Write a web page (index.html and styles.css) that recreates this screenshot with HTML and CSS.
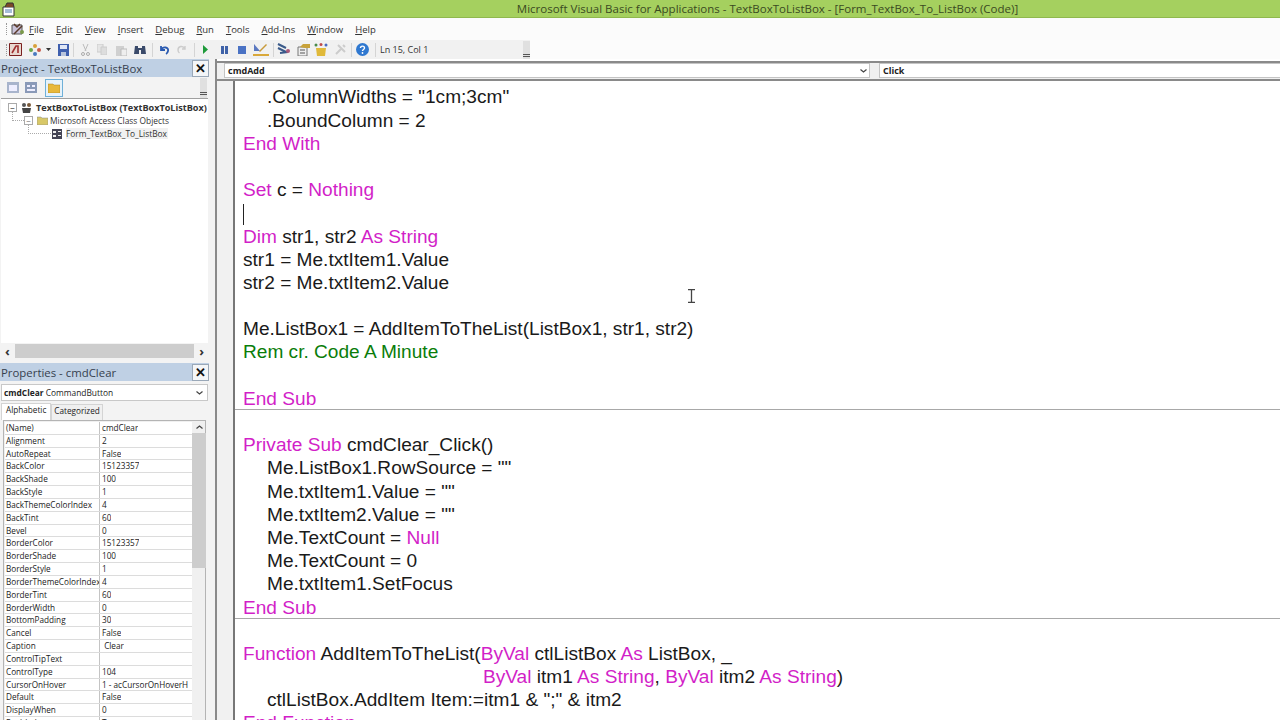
FILE: index.html
```html
<!DOCTYPE html>
<html lang="en">
<head>
    <meta charset="UTF-8">
    <title>Microsoft Visual Basic for Applications - TextBoxToListBox</title>
    <link rel="stylesheet" href="styles.css">
</head>
<body>
    <!-- Title bar -->
    <div class="titlebar">
        <svg class="app-icon" width="16" height="16" viewBox="0 0 16 16"><path d="M2 6h11v9H2z" fill="#fff" stroke="#333"/><path d="M4 6l2-4h6l1 4" fill="#7a4a2a" stroke="#333"/><path d="M4 9h7M4 11h7" stroke="#4a7ab0"/></svg>
        <span class="titlebar-text">Microsoft Visual Basic for Applications - TextBoxToListBox - [Form_TextBox_To_ListBox (Code)]</span>
    </div>

    <!-- Menu -->
    <div class="menubar">
        <span class="grip"></span>
        <svg class="menu-icon" width="14" height="14" viewBox="0 0 14 14"><path d="M1 3h10v9H1z" fill="#c9c2d8" stroke="#555"/><path d="M3 2l3 3 3-3M3 12l8-8" stroke="#5a3a2a" stroke-width="1.5" fill="none"/><circle cx="11" cy="10" r="2" fill="#7a9a4a"/></svg>
        <span class="menu-item menu-first"><u>F</u>ile</span>
        <span class="menu-item"><u>E</u>dit</span>
        <span class="menu-item"><u>V</u>iew</span>
        <span class="menu-item"><u>I</u>nsert</span>
        <span class="menu-item"><u>D</u>ebug</span>
        <span class="menu-item"><u>R</u>un</span>
        <span class="menu-item"><u>T</u>ools</span>
        <span class="menu-item"><u>A</u>dd-Ins</span>
        <span class="menu-item"><u>W</u>indow</span>
        <span class="menu-item"><u>H</u>elp</span>
    </div>

    <!-- Toolbar -->
    <div class="toolbar-row">
        <div class="toolbar">
            <span class="grip"></span>
            <svg class="tb gap-1" width="13" height="13" viewBox="0 0 13 13"><path d="M.5.5h12v12H.5z" fill="#e8d8d0" stroke="#7a1f1f"/><path d="M3 10l4-7h2v7" fill="none" stroke="#a03030" stroke-width="1.6"/></svg>
            <svg class="tb gap-6" width="14" height="14" viewBox="0 0 14 14"><circle cx="7" cy="3" r="2" fill="#d9a03a"/><circle cx="3" cy="7" r="2" fill="#6aa84a"/><circle cx="11" cy="7" r="2" fill="#c65a4a"/><circle cx="7" cy="11" r="2" fill="#4a7ac0"/></svg>
            <svg class="tb gap-4" width="5" height="3" viewBox="0 0 5 3"><path d="M0 0h5L2.500 3z" fill="#333"/></svg>
            <svg class="tb gap-7" width="11" height="12" viewBox="0 0 11 12"><path d="M0 0h11v12H0z" fill="#3f5fae"/><path d="M2 1h7v4H2z" fill="#dfe6f5"/><path d="M3 8h5v4H3z" fill="#b8c4dc"/></svg>
            <span class="tb-sep gap-4"></span>
            <svg class="tb gap-7" width="9" height="12" viewBox="0 0 9 12"><path d="M2 0l3 7M7 0L4 7" stroke="#bbb" fill="none"/><circle cx="2" cy="10" r="1.500" fill="none" stroke="#aaa"/><circle cx="7" cy="10" r="1.500" fill="none" stroke="#aaa"/></svg>
            <svg class="tb gap-7" width="10" height="11" viewBox="0 0 10 11"><path d="M0 0h6v8H0z" fill="#e5e5e5" stroke="#ccc"/><path d="M4 3h6v8H4z" fill="#ddd" stroke="#ccc"/></svg>
            <svg class="tb gap-9" width="11" height="12" viewBox="0 0 11 12"><path d="M0 2h8v10H0z" fill="#d0d0d0"/><path d="M5 5h6v7H5z" fill="#eee" stroke="#bbb"/></svg>
            <svg class="tb gap-7" width="12" height="11" viewBox="0 0 12 11"><path d="M1 2h3v2h4V2h3l1 8H7V6H5v4H0z" fill="#3a4a6a"/></svg>
            <span class="tb-sep gap-6"></span>
            <svg class="tb gap-6" width="10" height="10" viewBox="0 0 10 10"><path d="M2 1v4h4M2 5c2-4 8-3 7 1-.3 1.500-1 2.500-2 3" fill="none" stroke="#2a5ab0" stroke-width="1.800"/></svg>
            <svg class="tb gap-8" width="9" height="9" viewBox="0 0 9 9"><path d="M8 1v3H5M8 4C6 0 1 1 1 5c0 1.500.7 2.500 1.500 3" fill="none" stroke="#ccc" stroke-width="1.400"/></svg>
            <span class="tb-sep gap-8"></span>
            <svg class="tb gap-8" width="5" height="9" viewBox="0 0 5 9"><path d="M0 0l5 4.500L0 9z" fill="#1e9a3a"/></svg>
            <svg class="tb gap-13" width="7" height="8" viewBox="0 0 7 8"><path d="M0 0h3v8H0zM4 0h3v8H4z" fill="#3f62a8"/></svg>
            <svg class="tb gap-10" width="8" height="8" viewBox="0 0 8 8"><path d="M0 0h8v8H0z" fill="#4a72c4"/></svg>
            <svg class="tb gap-7" width="16" height="13" viewBox="0 0 16 13"><path d="M1 1l6 7H1z" fill="#5a78c0"/><path d="M6 8l7-7 1 1-7 7z" fill="#c89a3a"/><path d="M0 11h16v2H0z" fill="#d9a83a"/></svg>
            <span class="tb-sep gap-4"></span>
            <svg class="tb gap-3" width="14" height="13" viewBox="0 0 14 13"><path d="M1 1l8 4M1 5l8 4M3 10l8-1" stroke="#3a5a8a" stroke-width="2"/><circle cx="11" cy="8" r="2" fill="#a85a7a"/></svg>
            <svg class="tb gap-6" width="13" height="13" viewBox="0 0 13 13"><path d="M1 4h9v9H1z" fill="#eee" stroke="#777"/><path d="M3 4l3-3h7v4H8z" fill="#c8a23a"/><path d="M3 7h5M3 10h5" stroke="#555"/></svg>
            <svg class="tb gap-4" width="14" height="13" viewBox="0 0 14 13"><path d="M2 5h10l-1 8H3z" fill="#e0b93a"/><circle cx="2" cy="2" r="1.500" fill="#4a8a4a"/><circle cx="7" cy="1.500" r="1.500" fill="#c04a4a"/><circle cx="12" cy="2" r="1.500" fill="#4a6ac0"/></svg>
            <svg class="tb gap-7" width="11" height="11" viewBox="0 0 11 11"><path d="M1 10l6-6M3 1l7 7M8 1l2 2" stroke="#ccc" stroke-width="2" fill="none"/></svg>
            <span class="tb-sep gap-5"></span>
            <svg class="tb gap-4" width="13" height="13" viewBox="0 0 13 13"><circle cx="6.500" cy="6.500" r="6.500" fill="#2f78d0"/><path d="M4.500 5c0-2.500 4-2.500 4 0 0 1.500-2 1.500-2 3" fill="none" stroke="#fff" stroke-width="1.400"/><circle cx="6.500" cy="10" r=".9" fill="#fff"/></svg>
            <span class="tb-sep gap-6"></span>
            <span class="tb-status gap-4">Ln 15, Col 1</span>
            <span class="overflow-grip"></span>
        </div>
    </div>

    <div class="main">
        <!-- Left docked windows -->
        <div class="sidebar">
            <div class="dock-title">
                <span>Project - TextBoxToListBox</span>
                <span class="close-btn">&#10005;</span>
            </div>
            <div class="project-tools">
                <svg width="12" height="11" viewBox="0 0 12 11"><path d="M0 0h12v11H0z" fill="#a8b4cc"/><path d="M2 3h8v6H2z" fill="#eef"/></svg>
                <svg width="12" height="11" viewBox="0 0 12 11"><path d="M0 0h12v11H0z" fill="#8a9ab8"/><path d="M2 3h3v2H2zM7 3h3v2H7zM2 7h8v2H2z" fill="#eef"/></svg>
                <span class="folder-btn"><svg width="12" height="10" viewBox="0 0 12 10"><path d="M0 1h5l1 1h6v8H0z" fill="#e8b83a" stroke="#a88020" stroke-width=".5"/></svg></span>
                <span class="overflow-grip small"></span>
            </div>
            <div class="tree">
                <div class="tree-row root">
                    <span class="expander">&minus;</span>
                    <svg width="11" height="11" viewBox="0 0 11 11"><circle cx="3" cy="3" r="2" fill="#555"/><circle cx="8" cy="3" r="2" fill="#7a5a3a"/><path d="M1 6h9l-1 5H2z" fill="#444"/></svg>
                    <span class="tree-label">TextBoxToListBox (TextBoxToListBox)</span>
                </div>
                <div class="tree-row level1">
                    <span class="expander">&minus;</span>
                    <svg width="11" height="9" viewBox="0 0 11 9"><path d="M0 1h4l1 1h6v7H0z" fill="#d8c868" stroke="#888" stroke-width=".5"/></svg>
                    <span class="tree-label">Microsoft Access Class Objects</span>
                </div>
                <div class="tree-row level2">
                    <svg width="10" height="10" viewBox="0 0 10 10"><path d="M0 0h10v10H0z" fill="#445"/><path d="M1 2h3v2H1zM6 2h3v1H6zM1 6h3v2H1zM6 6h3v1H6z" fill="#eee"/></svg>
                    <span class="tree-label selected">Form_TextBox_To_ListBox</span>
                </div>
            </div>
            <div class="hscroll">
                <span class="scroll-arrow">&#8249;</span>
                <span class="hscroll-thumb"></span>
                <span class="scroll-arrow">&#8250;</span>
            </div>

            <div class="dock-title props-title">
                <span>Properties - cmdClear</span>
                <span class="close-btn">&#10005;</span>
            </div>
            <div class="props-combo">
                <span><b>cmdClear</b> CommandButton</span>
                <svg width="7" height="4" viewBox="0 0 7 4"><path d="M.5.500l3 2.500 3-2.500" fill="none" stroke="#444" stroke-width="1.200"/></svg>
            </div>
            <div class="tabs">
                <span class="tab active">Alphabetic</span>
                <span class="tab">Categorized</span>
            </div>
            <div class="grid-frame">
                <div class="prop-list" id="props"></div>
                <div class="vscroll">
                    <svg width="7" height="4" viewBox="0 0 7 4"><path d="M.5 3.500l3-2.500 3 2.500" fill="none" stroke="#444" stroke-width="1.200"/></svg>
                    <span class="vscroll-thumb"></span>
                </div>
            </div>
        </div>

        <div class="splitter"></div>

        <!-- Code window -->
        <div class="codepane">
            <div class="code-combos">
                <div class="combo combo-object"><b>cmdAdd</b><svg width="7" height="4" viewBox="0 0 7 4"><path d="M.5.500l3 2.500 3-2.500" fill="none" stroke="#444" stroke-width="1.200"/></svg></div>
                <div class="combo combo-proc"><b>Click</b></div>
            </div>
            <div class="code-body">
                <div class="gutter"></div>
                <div class="code">
                    <div class="line in">.ColumnWidths = "1cm;3cm"</div>
                    <div class="line in">.BoundColumn = 2</div>
                    <div class="line"><i>End With</i></div>
                    <div class="line"></div>
                    <div class="line"><i>Set</i> c = <i>Nothing</i></div>
                    <div class="line"><span class="caret"></span></div>
                    <div class="line"><i>Dim</i> str1, str2 <i>As String</i></div>
                    <div class="line">str1 = Me.txtItem1.Value</div>
                    <div class="line">str2 = Me.txtItem2.Value</div>
                    <div class="line"></div>
                    <div class="line">Me.ListBox1 = AddItemToTheList(ListBox1, str1, str2)</div>
                    <div class="line rem">Rem cr. Code A Minute</div>
                    <div class="line"></div>
                    <div class="line proc-end"><i>End Sub</i></div>
                    <div class="line"></div>
                    <div class="line"><i>Private Sub</i> cmdClear_Click()</div>
                    <div class="line in">Me.ListBox1.RowSource = ""</div>
                    <div class="line in">Me.txtItem1.Value = ""</div>
                    <div class="line in">Me.txtItem2.Value = ""</div>
                    <div class="line in">Me.TextCount = <i>Null</i></div>
                    <div class="line in">Me.TextCount = 0</div>
                    <div class="line in">Me.txtItem1.SetFocus</div>
                    <div class="line proc-end"><i>End Sub</i></div>
                    <div class="line"></div>
                    <div class="line"><i>Function</i> AddItemToTheList(<i>ByVal</i> ctlListBox <i>As</i> ListBox, _</div>
                    <div class="line in2"><i>ByVal</i> itm1 <i>As String</i>, <i>ByVal</i> itm2 <i>As String</i>)</div>
                    <div class="line in">ctlListBox.AddItem Item:=itm1 &amp; ";" &amp; itm2</div>
                    <div class="line"><i>End Function</i></div>
                </div>
            </div>
            <svg class="ibeam" width="7" height="14" viewBox="0 0 7 14"><path d="M0 .5h7M0 13.500h7M3.500 0v14" stroke="#444" stroke-width="1.300" fill="none"/></svg>
        </div>
    </div>

    <script>
        // Filas de la ventana de propiedades
        var filas = [
            ["(Name)", "cmdClear"], ["Alignment", "2"], ["AutoRepeat", "False"], ["BackColor", "15123357"],
            ["BackShade", "100"], ["BackStyle", "1"], ["BackThemeColorIndex", "4"], ["BackTint", "60"],
            ["Bevel", "0"], ["BorderColor", "15123357"], ["BorderShade", "100"], ["BorderStyle", "1"],
            ["BorderThemeColorIndex", "4"], ["BorderTint", "60"], ["BorderWidth", "0"], ["BottomPadding", "30"],
            ["Cancel", "False"], ["Caption", "\u00a0Clear"], ["ControlTipText", ""], ["ControlType", "104"],
            ["CursorOnHover", "1 - acCursorOnHoverH"], ["Default", "False"], ["DisplayWhen", "0"], ["Enabled", "True"]
        ];
        var html = "";
        filas.forEach(function (f) {
            html += '<div class="prop-row"><span class="prop-name">' + f[0] + '</span><span class="prop-value">' + f[1] + '</span></div>';
        });
        document.getElementById("props").innerHTML = html;
    </script>
</body>
</html>
```

FILE: styles.css
```css
html, body {
    margin: 0;
    padding: 0;
    height: 720px;
    overflow: hidden;
}

body {
    font-family: "Open Sans", "Noto Sans", sans-serif;
    background-color: #f3f3f3;
    color: #222;
    display: flex;
    flex-direction: column;
}

/* Title bar */
.titlebar {
    height: 18px;
    box-sizing: border-box;
    background-color: #a5d05f;
    border-bottom: 1px solid #8fb84e;
    display: flex;
    align-items: center;
    justify-content: center;
    flex: none;
    position: relative;
}

.titlebar-text {
    font-size: 11.5px;
    color: #3a4a22;
    margin-left: 255px;
}

.app-icon {
    position: absolute;
    left: 1px;
    top: 1px;
}

/* Menu */
.menubar {
    height: 22px;
    background-color: #fbfbfb;
    display: flex;
    align-items: center;
    flex: none;
    padding-left: 6px;
    font-size: 9.5px;
    color: #333;
}

.grip {
    width: 1px;
    height: 12px;
    border-left: 1px dotted #999;
    flex: none;
}

.menu-icon {
    margin-left: 3px;
}

.menu-item {
    margin-left: 12px;
}

.menu-first {
    margin-left: 4px;
}

/* Toolbar */
.toolbar-row {
    height: 19px;
    background-color: #fcfcfc;
    flex: none;
    display: flex;
}

.toolbar {
    width: 524px;
    padding-left: 6px;
    background-color: #f1f1f1;
    display: flex;
    align-items: center;
    position: relative;
}

.tb {
    flex: none;
}

.tb-sep {
    width: 1px;
    height: 14px;
    background-color: #d4d4d4;
    flex: none;
}

.gap-1 { margin-left: 1px; }
.gap-3 { margin-left: 3px; }
.gap-4 { margin-left: 4px; }
.gap-5 { margin-left: 5px; }
.gap-6 { margin-left: 6px; }
.gap-7 { margin-left: 7px; }
.gap-8 { margin-left: 8px; }
.gap-9 { margin-left: 9px; }
.gap-10 { margin-left: 10px; }
.gap-13 { margin-left: 13px; }

.tb-status {
    font-size: 9px;
    color: #333;
}

.overflow-grip {
    position: absolute;
    right: 0;
    top: 1px;
    bottom: 0;
    width: 7px;
    background: linear-gradient(#e0e0e0 70%, #555 70%, #555 75%, #e0e0e0 75%, #e0e0e0 82%, #555 82%, #555 87%, #e0e0e0 87%);
}

.overflow-grip.small {
    right: 2px;
}

/* Layout */
.main {
    flex: 1;
    display: flex;
    min-height: 0;
}

.sidebar {
    width: 209px;
    flex: none;
    background-color: #f3f3f3;
    display: flex;
    flex-direction: column;
    overflow: hidden;
}

.splitter {
    width: 8px;
    flex: none;
    background-color: #f3f3f3;
    border-right: 2px solid #8a8a8a;
    box-sizing: border-box;
}

/* Docked windows */
.dock-title {
    height: 18px;
    background-color: #bfd0e4;
    font-size: 11.4px;
    color: #36404e;
    display: flex;
    align-items: center;
    justify-content: space-between;
    padding-left: 1px;
    flex: none;
}

.props-title {
    margin-top: 5px;
}

.close-btn {
    width: 15px;
    height: 15px;
    background-color: #f4f6f8;
    border: 1px solid #9aa8b8;
    font-size: 13px;
    font-weight: bold;
    line-height: 15px;
    text-align: center;
    color: #111;
}

.project-tools {
    height: 21px;
    display: flex;
    align-items: center;
    gap: 6px;
    padding-left: 7px;
    position: relative;
    flex: none;
}

.folder-btn {
    width: 16px;
    height: 16px;
    background-color: #e6f2fa;
    border: 1px solid #6fb0d8;
    display: flex;
    align-items: center;
    justify-content: center;
    margin-left: 2px;
}

.tree {
    height: 242px;
    background-color: #fff;
    border-top: 1px solid #a0a0a0;
    padding-top: 2px;
    margin: 0 1px;
    font-size: 8.4px;
    color: #333;
    overflow: hidden;
    flex: none;
}

.tree-row {
    height: 13px;
    display: flex;
    align-items: center;
    white-space: nowrap;
    position: relative;
}

.tree-row svg {
    flex: none;
}

.expander {
    width: 7px;
    height: 7px;
    border: 1px solid #aaa;
    font-size: 8px;
    line-height: 7px;
    text-align: center;
    margin-right: 4px;
    color: #666;
    flex: none;
}

.root {
    padding-left: 7px;
    font-weight: bold;
    font-size: 9.1px;
}

.level1 {
    padding-left: 23px;
}

.level2 {
    padding-left: 51px;
}

/* Lineas punteadas del arbol */
.level1::before {
    content: "";
    position: absolute;
    left: 11px;
    top: -3px;
    width: 11px;
    height: 9px;
    border-left: 1px dotted #aaa;
    border-bottom: 1px dotted #aaa;
}

.level2::before {
    content: "";
    position: absolute;
    left: 27px;
    top: -3px;
    width: 22px;
    height: 9px;
    border-left: 1px dotted #aaa;
    border-bottom: 1px dotted #aaa;
}

.tree-label {
    margin-left: 4px;
}

.level1 .tree-label {
    margin-left: 2px;
}

.selected {
    background-color: #f1f1f1;
    padding-right: 1px;
}

.hscroll {
    height: 14px;
    margin-top: 1px;
    display: flex;
    align-items: center;
    justify-content: space-between;
    padding: 0 5px;
    background-color: #f3f3f3;
    font-size: 13px;
    line-height: 14px;
    flex: none;
}

.hscroll-thumb {
    flex: 1;
    height: 100%;
    background-color: #cdcdcd;
    margin: 0 5px;
}

.scroll-arrow {
    color: #333;
    font-weight: bold;
}

.props-combo {
    height: 15px;
    margin: 3px 1px 0;
    padding: 0 4px 0 2px;
    background-color: #fff;
    border: 1px solid #c8c8c8;
    font-size: 8.4px;
    display: flex;
    align-items: center;
    justify-content: space-between;
    flex: none;
}

.tabs {
    display: flex;
    padding-left: 1px;
    margin-top: 2px;
    height: 17px;
    font-size: 8.2px;
    flex: none;
}

.tab {
    padding: 0 2px;
    border: 1px solid #d4d4d4;
    border-bottom: none;
    background-color: #f0f0f0;
    margin-top: 1px;
}

.tab.active {
    background-color: #fff;
    padding: 0 4px;
    margin-top: 0;
}

.grid-frame {
    flex: 1;
    margin: 0 3px 0 3px;
    border: 1px solid #b4b4b4;
    border-bottom: none;
    background-color: #f0f0f0;
    display: flex;
    min-height: 0;
    padding: 1px 1px 0;
}

.prop-list {
    width: 187px;
    flex: none;
    font-size: 8.2px;
    color: #222;
    overflow: hidden;
}

.prop-row {
    height: 12.83px;
    box-sizing: border-box;
    display: flex;
    background-color: #fff;
    border-bottom: 1px solid #dcdcdc;
    line-height: 12px;
    white-space: nowrap;
    overflow: hidden;
}

.prop-name {
    width: 95px;
    flex: none;
    padding-left: 1px;
    box-sizing: border-box;
    border-right: 1px solid #c4c4c4;
    overflow: hidden;
}

.prop-value {
    padding-left: 2px;
    overflow: hidden;
}

.vscroll {
    width: 14px;
    flex: none;
    text-align: center;
    padding-top: 3px;
    box-sizing: border-box;
}

.vscroll svg {
    display: block;
    margin: 0 auto 4px;
}

.vscroll-thumb {
    display: block;
    height: 135px;
    background-color: #cdcdcd;
}

/* Code window */
.codepane {
    flex: 1;
    display: flex;
    flex-direction: column;
    min-width: 0;
    position: relative;
    background-color: #fff;
}

.code-combos {
    height: 20px;
    flex: none;
    display: flex;
    box-sizing: border-box;
    border-top: 2px solid #8a8a8a;
    border-bottom: 2px solid #8a8a8a;
    padding: 0 0 1px 7px;
    background-color: #f0f0f0;
    margin-top: 2px;
    font-size: 9px;
    color: #222;
}

.combo {
    height: 15px;
    box-sizing: border-box;
    background-color: #fff;
    border: 1px solid #c4c4c4;
    display: flex;
    align-items: center;
    justify-content: space-between;
    padding: 0 2px 0 3px;
}

.combo-object {
    width: 646px;
}

.combo-proc {
    flex: 1;
    margin-left: 9px;
    border-right: none;
}

.code-body {
    flex: 1;
    display: flex;
    min-height: 0;
    overflow: hidden;
}

.gutter {
    width: 18px;
    box-sizing: border-box;
    flex: none;
    background-color: #f1f1f1;
    border-right: 2px solid #777;
}

.code {
    flex: 1;
    min-width: 0;
    padding-top: 3.4px;
    font-family: "Liberation Sans", Arial, sans-serif;
    font-size: 19.1px;
    color: #1a1a1a;
}

.line {
    height: 23.2px;
    line-height: 25.2px;
    padding-left: 8px;
    white-space: nowrap;
}

.line i {
    font-style: normal;
    color: #d21fc8;
}

.line.in {
    padding-left: 32px;
}

.line.in2 {
    padding-left: 248px;
}

.line.rem {
    color: #0a7d0a;
}

.proc-end {
    box-shadow: 0 1px 0 #a8a8a8;
}

.caret {
    display: inline-block;
    width: 1px;
    height: 21px;
    background-color: #222;
    vertical-align: middle;
}

.ibeam {
    position: absolute;
    left: 471px;
    top: 230px;
}
```
